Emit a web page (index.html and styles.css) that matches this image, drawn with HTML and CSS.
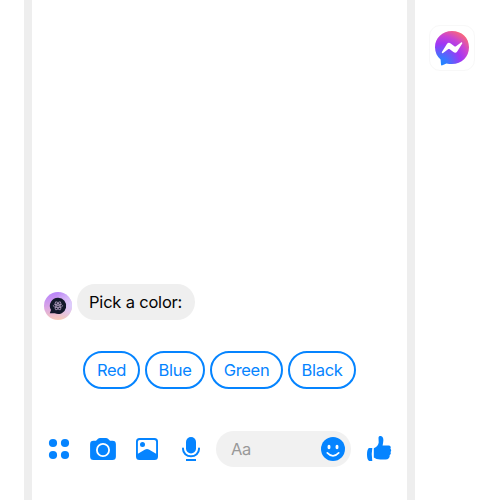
FILE: index.html
```html
<!DOCTYPE html>
<html lang="en">
<head>
<meta charset="utf-8">
<title>Messenger chat</title>
<link rel="stylesheet" href="styles.css">
</head>
<body>
<div class="stage">
  <main class="phone">
    <section class="message">
      <svg class="avatar" viewBox="0 0 28 28">
        <defs>
          <linearGradient id="av" x1=".4" y1="0" x2=".55" y2="1"><stop offset="0" stop-color="#b884fb"/><stop offset=".5" stop-color="#dba6e4"/><stop offset="1" stop-color="#f6ccb8"/></linearGradient>
          <radialGradient id="glow" cx="1" cy=".45" r=".65"><stop offset="0" stop-color="#dcd0ff"/><stop offset="1" stop-color="#dcd0ff" stop-opacity="0"/></radialGradient>
        </defs>
        <circle cx="14" cy="14" r="14" fill="url(#av)"/>
        <circle cx="14" cy="14" r="14" fill="url(#glow)"/>
        <path d="M14.200 5.800a8.100 8.100 0 1 1-3.400 15.500H5.800l1.200-3.300A8.100 8.100 0 0 1 14.200 5.800Z" fill="#11182a"/>
        <g fill="none" stroke="#b9a5c8" stroke-width=".7"><ellipse cx="14" cy="13.800" rx="4.600" ry="1.800"/><ellipse cx="14" cy="13.800" rx="4.600" ry="1.800" transform="rotate(60 14 13.800)"/><ellipse cx="14" cy="13.800" rx="4.600" ry="1.800" transform="rotate(120 14 13.800)"/></g>
        <circle cx="14" cy="13.800" r=".8" fill="#d7c3e0"/>
      </svg>
      <p class="bubble">Pick a color:</p>
    </section>
    <section class="replies">
      <button class="reply red">Red</button>
      <button class="reply blue">Blue</button>
      <button class="reply green">Green</button>
      <button class="reply black">Black</button>
    </section>
    <footer class="composer">
      <svg class="icon" viewBox="0 0 28 28"><circle cx="8" cy="8" r="4.100"/><circle cx="20" cy="8" r="4.100"/><circle cx="8" cy="20" r="4.100"/><circle cx="20" cy="20" r="4.100"/></svg>
      <svg class="icon" viewBox="0 0 28 28"><path fill-rule="evenodd" d="M11 3h6q1.200 0 2 .8l2 2h2.500q3.400 0 3.400 3.400V21.500q0 3.500-3.500 3.500H4.600q-3.500 0-3.500-3.500V9.200q0-3.400 3.400-3.400H7l2-2Q9.800 3 11 3ZM14 8a7 7 0 1 0 0 14 7 7 0 0 0 0-14Z"/><circle cx="14" cy="15" r="5.200"/></svg>
      <svg class="icon" viewBox="0 0 28 28"><path fill-rule="evenodd" d="M6.500 3h15Q25 3 25 6.500v15q0 3.500-3.500 3.500h-15Q3 25 3 21.500v-15Q3 3 6.500 3ZM6.800 4.900Q4.900 4.900 4.900 6.800v11.900l7.200-4.300q1.900-.9 3.800 0l7.200 4.300V6.800q0-1.900-1.900-1.900Z"/><circle cx="9.500" cy="9.400" r="2.500"/></svg>
      <svg class="icon" viewBox="0 0 28 28"><rect x="9" y="2" width="10" height="16.500" rx="5"/><path d="M6 13.500v.5a8 7.300 0 0 0 16 0v-.5" fill="none" stroke="#0584ff" stroke-width="2" stroke-linecap="round"/><path d="M9 24h10v2H9z"/></svg>
      <div class="field">
        <span>Aa</span>
        <svg class="smile" viewBox="0 0 24 24"><circle cx="12" cy="12" r="12"/><ellipse cx="8" cy="10" rx="1.500" ry="2.200" fill="#fff"/><ellipse cx="16" cy="10" rx="1.500" ry="2.200" fill="#fff"/><path d="M6.300 15.800q5.700 6 11.400 0" fill="none" stroke="#fff" stroke-width="1.700" stroke-linecap="round"/></svg>
      </div>
      <svg class="icon" viewBox="0 0 28 28"><path d="M4 13h3.300q-1.200 6 0 13H4.300Q2 25 2 19.500T4 13Z"/><path d="M9.300 13c2.700-1.200 4-3.200 4.400-5.600L13.500 3c0-1.700 1.200-2.200 2.500-1.900 2 .5 2.800 3.100 2.200 6l-.6 3.400h6c1.900 0 2.700 1.700 1.800 3.200 1.100.9 1 2.500.1 3.300.7 1.200.3 2.500-.8 3.100.2 2.900-1.300 4.500-4.200 4.500h-5.200c-2.700 0-4.900-.8-6.500-2V13.800q0-.6.500-.8Z"/></svg>
    </footer>
  </main>
  <aside class="badge">
    <svg viewBox="0 0 36 36">
      <defs><radialGradient id="mg" cx=".15" cy="1" r="1.150"><stop offset="0" stop-color="#1489ff"/><stop offset=".2" stop-color="#3978ff"/><stop offset=".55" stop-color="#a037f5"/><stop offset=".75" stop-color="#c844d4"/><stop offset="1" stop-color="#ff6b70"/></radialGradient></defs>
      <path d="M18 1C8.300 1 1 8 1 17.200c0 5 2.100 9.300 5.600 12.200l.4 5q.1 1.400 1.400.9l4.100-1.900c1.700.5 3.600.7 5.500.7 9.700 0 17-7.200 17-16.900S27.700 1 18 1Z" fill="url(#mg)"/>
      <path d="m7.900 22 5-7.900a2.600 2.600 0 0 1 3.800-.7l4 3q.5.300 1 0l5.300-4c.7-.5 1.600.3 1.200 1.100l-5 7.900a2.600 2.600 0 0 1-3.800.7l-4-3q-.5-.3-1 0l-5.300 4c-.7.500-1.600-.3-1.200-1.100Z" fill="#fff"/>
    </svg>
  </aside>
</div>
</body>
</html>
```
FILE: styles.css
```css
* { box-sizing: border-box; }
body {
  margin: 0;
  background: #fff;
  font-family: Inter, "Liberation Sans", sans-serif;
  overflow: hidden;
}
.stage {
  display: flex;
  align-items: flex-start;
  height: 500px;
  padding-left: 24px;
}
.phone {
  width: 391px;
  height: 500px;
  border: solid #eee;
  border-width: 0 8px;
  display: flex;
  flex-direction: column;
  justify-content: flex-end;
  padding-bottom: 33px;
}
.message {
  display: flex;
  align-items: flex-end;
  gap: 5px;
  padding-left: 12px;
}
.avatar { width: 28px; height: 28px; }
.bubble {
  margin: 0;
  width: 118px;
  height: 36px;
  padding-left: 12px;
  border-radius: 18px;
  background: #efefef;
  color: #050505;
  font-size: 16.5px;
  line-height: 36px;
  letter-spacing: -0.2px;
  white-space: nowrap;
}
.replies {
  display: flex;
  justify-content: center;
  gap: 5px;
  margin-top: 31px;
}
.reply {
  height: 38px;
  padding: 0;
  border: 2px solid #0584ff;
  border-radius: 19px;
  background: #fff;
  color: #0584ff;
  font: 16.5px/34px Inter, "Liberation Sans", sans-serif;
  letter-spacing: -0.3px;
}
.red { width: 57px; }
.blue { width: 60px; }
.green { width: 73px; }
.black { width: 68px; }
.composer {
  display: flex;
  align-items: center;
  height: 36px;
  margin-top: 42px;
  padding-left: 13px;
  gap: 16px;
}
.icon { width: 28px; height: 28px; fill: #0584ff; flex: none; }
.field {
  display: flex;
  align-items: center;
  justify-content: space-between;
  width: 135px;
  height: 36px;
  margin: 0 -2px 0 -5px;
  padding: 0 6px 0 15px;
  border-radius: 18px;
  background: #f1f1f1;
  color: #999;
  font-size: 16.5px;
  letter-spacing: -0.4px;
}
.smile { width: 24px; height: 24px; fill: #0584ff; }
.badge {
  width: 46px;
  height: 46px;
  margin: 25px 0 0 14px;
  padding: 4px;
  border: 1px solid #f8f8f8;
  border-radius: 11px;
}
.badge svg { display: block; width: 36px; height: 36px; }
```
